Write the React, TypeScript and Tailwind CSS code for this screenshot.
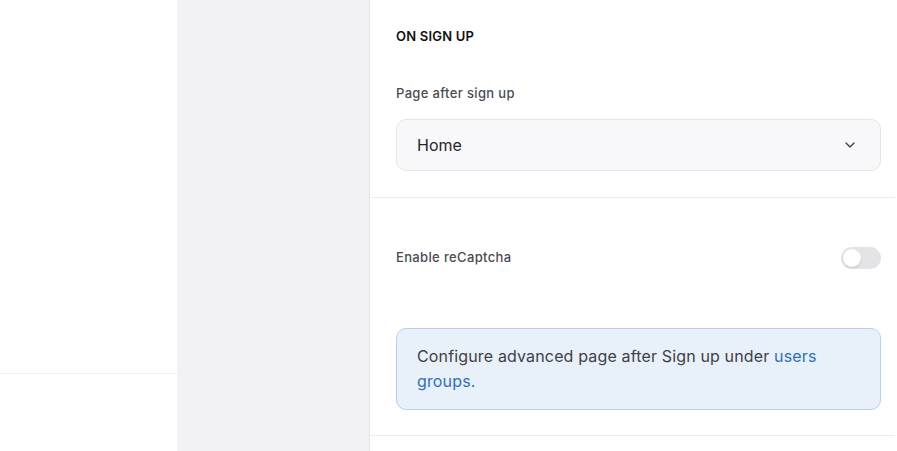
import { ChevronDown } from "lucide-react";

export default function App() {
  return (
    <main className="flex h-[451px] w-[897px] overflow-hidden bg-white font-['Inter',sans-serif]">
      {/* left blank area */}
      <div className="w-[177px] shrink-0">
        <div className="h-[374px] border-b border-[#f3f3f5]" />
      </div>

      {/* gray column */}
      <div className="w-[193px] shrink-0 border-r border-[#e4e4e7] bg-[#f2f2f4]" />

      {/* settings panel */}
      <div className="flex-1 pr-[2px]">
        {/* On sign up */}
        <section className="border-b border-[#ececef] pt-[28px] pr-[14px] pb-[26px] pl-[26px]">
          <h2 className="text-[13px] leading-[16px] font-semibold tracking-[0.2px] text-[#111]">
            ON SIGN UP
          </h2>

          <label className="mt-[41px] block text-[13px] leading-[16px] font-medium tracking-[0.35px] text-[#4b4b52]">
            Page after sign up
          </label>

          <button className="mt-[18px] flex h-[52px] w-full items-center justify-between rounded-[10px] border border-[#e5e5e8] bg-[#f8f8fa] pr-[22px] pl-[20px]">
            <span className="text-[16px] text-[#27272a]">Home</span>
            <ChevronDown size={16} strokeWidth={2} className="text-[#3f3f46]" />
          </button>
        </section>

        {/* reCaptcha */}
        <section className="border-b border-[#ececef] pt-[49px] pr-[14px] pb-[25px] pl-[26px]">
          <div className="flex items-center justify-between">
            <span className="text-[13px] font-medium tracking-[0.35px] text-[#4b4b52]">
              Enable reCaptcha
            </span>
            <div className="flex h-[22px] w-[40px] items-center rounded-full bg-[#e4e4e7] px-[2px]">
              <div className="h-[18px] w-[18px] rounded-full bg-white shadow-sm" />
            </div>
          </div>

          <div className="mt-[59px] rounded-[10px] border border-[#b9d0ec] bg-[#e8f0fa] px-[20px] pt-[15px] pb-[15px] text-[16px] leading-[25px] tracking-[0.15px] text-[#3f3f46]">
            Configure advanced page after Sign up under{" "}
            <a className="text-[#2f6fb5]">users groups.</a>
          </div>
        </section>
      </div>
    </main>
  );
}
